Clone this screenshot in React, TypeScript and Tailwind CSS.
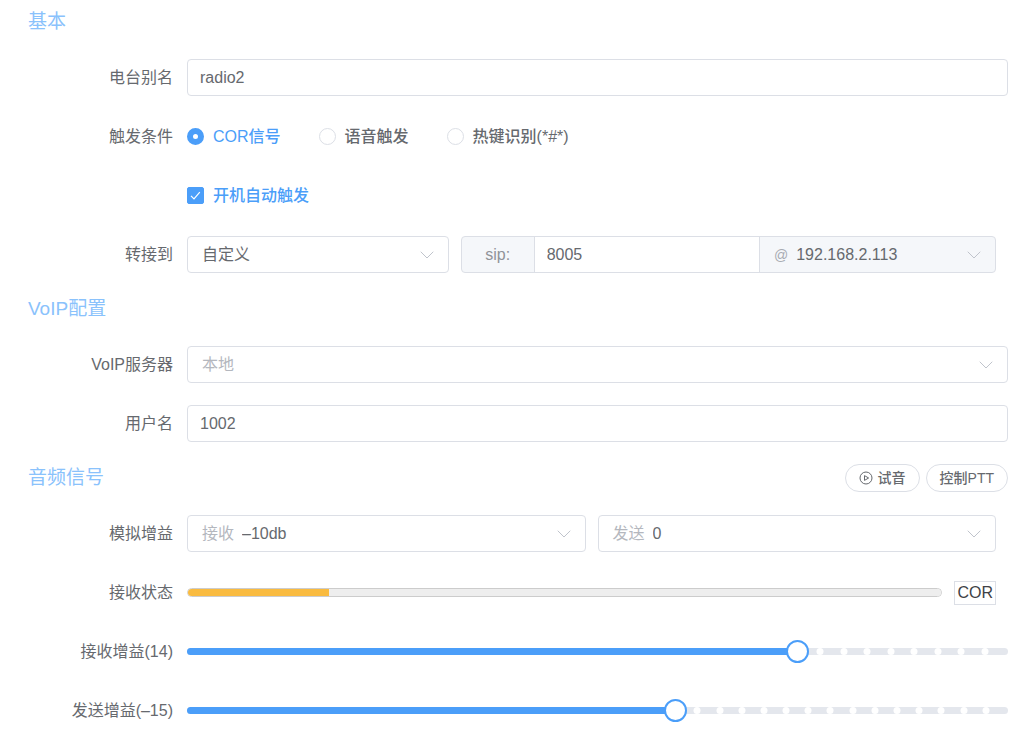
import React, { useState } from 'react';

interface RowProps {
  label?: string;
  htmlFor?: string;
  children: React.ReactNode;
}

interface SelectBoxProps {
  id: string;
  label: string;
  options: string[];
  prefix?: string;
  muted?: boolean;
}

interface GainSliderProps {
  id: string;
  min: number;
  max: number;
  value: number;
  onChange: (value: number) => void;
}

// Show negative gains with a full-width dash instead of a hyphen
const formatGain = (value: number) => (value < 0 ? `–${Math.abs(value)}` : `${value}`);

function Chevron() {
  return (
    <svg
      className="pointer-events-none h-2 w-3.5 shrink-0 text-[#c0c4cc]"
      viewBox="0 0 14 8"
      fill="none"
      stroke="currentColor"
      strokeLinecap="round"
      strokeLinejoin="round"
    >
      <path d="M1 1l6 6 6-6" />
    </svg>
  );
}

function Row({ label, htmlFor, children }: RowProps) {
  return (
    <div className="mb-[22px] flex h-[37px] items-center gap-3.5">
      {htmlFor ? (
        <label htmlFor={htmlFor} className="w-[145px] shrink-0 text-right">
          {label}
        </label>
      ) : (
        <span className="w-[145px] shrink-0 text-right">{label}</span>
      )}
      <div className="min-w-0 flex-1">{children}</div>
    </div>
  );
}

function SectionTitle({ title, children }: { title: string; children?: React.ReactNode }) {
  return (
    <div className="mb-[23px] flex h-7 items-center justify-between">
      <h2 className="text-[19px] leading-7 text-[#8ac2fc]">{title}</h2>
      {children && <div className="flex gap-1.5">{children}</div>}
    </div>
  );
}

function TextBox({ id, defaultValue }: { id: string; defaultValue: string }) {
  return (
    <input
      id={id}
      type="text"
      defaultValue={defaultValue}
      className="block h-[37px] w-full rounded border border-[#dcdfe6] bg-white px-3 outline-none focus:border-[#4b9ef9]"
    />
  );
}

function SelectBox({ id, label, options, prefix, muted }: SelectBoxProps) {
  return (
    <div className="flex h-[37px] items-center gap-2 rounded border border-[#dcdfe6] bg-white pr-3.5 pl-3.5">
      {prefix && <span className="shrink-0 text-[#b4b7be]">{prefix}</span>}
      <select
        id={id}
        aria-label={label}
        className={`h-full min-w-0 flex-1 appearance-none bg-transparent outline-none ${
          muted ? 'text-[#b4b7be]' : ''
        }`}
      >
        {options.map((option) => (
          <option key={option}>{option}</option>
        ))}
      </select>
      <Chevron />
    </div>
  );
}

function GainSlider({ id, min, max, value, onChange }: GainSliderProps) {
  const percent = (step: number) => `${((step - min) / (max - min)) * 100}%`;
  const stops: number[] = [];
  for (let step = value + 1; step < max; step++) {
    stops.push(step);
  }

  return (
    <div className="relative h-[7px] rounded-full bg-[#e4e7ed]">
      <div className="h-full rounded-l-full bg-[#4b9ef9]" style={{ width: percent(value) }} />
      {stops.map((step) => (
        <span
          key={step}
          className="absolute top-0 size-[7px] -translate-x-1/2 rounded-full bg-white"
          style={{ left: percent(step) }}
        />
      ))}
      <input
        id={id}
        type="range"
        min={min}
        max={max}
        value={value}
        onChange={(e) => onChange(Number(e.target.value))}
        className="absolute -top-2 -left-3 h-[23px] w-[calc(100%+24px)] cursor-pointer appearance-none bg-transparent outline-none [&::-webkit-slider-thumb]:size-[23px] [&::-webkit-slider-thumb]:appearance-none [&::-webkit-slider-thumb]:rounded-full [&::-webkit-slider-thumb]:border-2 [&::-webkit-slider-thumb]:border-solid [&::-webkit-slider-thumb]:border-[#4b9ef9] [&::-webkit-slider-thumb]:bg-white"
      />
    </div>
  );
}

const TRIGGERS = [
  { value: 'cor', label: 'COR信号' },
  { value: 'voice', label: '语音触发' },
  { value: 'hotkey', label: '热键识别(*#*)' },
];

const roundButton =
  'flex h-7 cursor-pointer items-center gap-[5px] rounded-full border border-[#dcdfe6] bg-white px-[13px] text-sm font-medium';

export default function App() {
  const [trigger, setTrigger] = useState('cor');
  const [autoStart, setAutoStart] = useState(true);
  const [rxGain, setRxGain] = useState(14);
  const [txGain, setTxGain] = useState(-15);

  return (
    <form className="bg-white pt-2 pr-4 pl-7 font-['Liberation_Sans','Noto_Sans_CJK_SC',sans-serif] text-base text-[#66696e]">
      <SectionTitle title="基本" />
      <Row label="电台别名" htmlFor="alias">
        <TextBox id="alias" defaultValue="radio2" />
      </Row>
      <Row label="触发条件">
        <div className="flex items-center gap-[38px]">
          {TRIGGERS.map((item) => (
            <label
              key={item.value}
              className={`flex cursor-pointer items-center gap-[9px] font-medium ${
                trigger === item.value ? 'text-[#4b9ef9]' : ''
              }`}
            >
              <input
                type="radio"
                name="trigger"
                value={item.value}
                checked={trigger === item.value}
                onChange={() => setTrigger(item.value)}
                className="size-[17px] shrink-0 appearance-none rounded-full border border-[#dcdfe6] bg-white checked:border-6 checked:border-[#4b9ef9]"
              />
              {item.label}
            </label>
          ))}
        </div>
      </Row>
      <Row>
        <label
          className={`flex w-fit cursor-pointer items-center gap-[9px] font-medium ${
            autoStart ? 'text-[#4b9ef9]' : ''
          }`}
        >
          <span className="grid size-[17px] place-items-center">
            <input
              type="checkbox"
              checked={autoStart}
              onChange={(e) => setAutoStart(e.target.checked)}
              className="col-start-1 row-start-1 size-[17px] appearance-none rounded-xs border border-[#dcdfe6] bg-white checked:border-[#4b9ef9] checked:bg-[#4b9ef9]"
            />
            <svg
              className="pointer-events-none col-start-1 row-start-1 size-[17px] text-white"
              viewBox="0 0 17 17"
              fill="none"
              stroke="currentColor"
              strokeWidth="1.2"
            >
              <path d="M4 8.8l3 3 5.8-6.6" />
            </svg>
          </span>
          开机自动触发
        </label>
      </Row>
      <Row label="转接到" htmlFor="target">
        <div className="grid grid-cols-3">
          <div className="pr-3">
            <SelectBox id="target" label="转接到" options={['自定义']} />
          </div>
          <div className="col-span-2 pr-3">
            <div className="flex h-[37px] overflow-hidden rounded border border-[#dcdfe6] bg-[#f5f7fa]">
              <label
                htmlFor="sip"
                className="flex w-[73px] shrink-0 items-center justify-center border-r border-[#dcdfe6] text-[#909399]"
              >
                sip:
              </label>
              <input
                id="sip"
                type="text"
                defaultValue="8005"
                className="min-w-0 flex-1 bg-white px-3 outline-none"
              />
              <div className="flex w-[236px] shrink-0 items-center gap-2 border-l border-[#dcdfe6] pr-3.5 pl-3.5">
                <span className="text-sm text-[#a8abb2]">@</span>
                <select
                  aria-label="服务器地址"
                  className="h-full min-w-0 flex-1 appearance-none bg-transparent outline-none"
                >
                  <option>192.168.2.113</option>
                </select>
                <Chevron />
              </div>
            </div>
          </div>
        </div>
      </Row>

      <SectionTitle title="VoIP配置" />
      <Row label="VoIP服务器" htmlFor="server">
        <SelectBox id="server" label="VoIP服务器" options={['本地']} muted />
      </Row>
      <Row label="用户名" htmlFor="username">
        <TextBox id="username" defaultValue="1002" />
      </Row>

      <SectionTitle title="音频信号">
        <button type="button" className={roundButton}>
          <svg className="size-3.5" viewBox="0 0 14 14" fill="none" stroke="currentColor">
            <circle cx="7" cy="7" r="6" />
            <path d="M5.5 4.6v4.8L9.6 7z" strokeLinejoin="round" />
          </svg>
          试音
        </button>
        <button type="button" className={roundButton}>
          控制PTT
        </button>
      </SectionTitle>
      <Row label="模拟增益" htmlFor="analog-rx">
        <div className="grid grid-cols-2">
          <div className="pr-3">
            <SelectBox id="analog-rx" label="接收" prefix="接收" options={['–10db']} />
          </div>
          <div className="pr-3">
            <SelectBox id="analog-tx" label="发送" prefix="发送" options={['0']} />
          </div>
        </div>
      </Row>
      <Row label="接收状态" htmlFor="rx-level">
        <div className="flex items-center gap-3 pr-3">
          <progress
            id="rx-level"
            max={752}
            value={141}
            className="block h-[9px] min-w-0 flex-1 appearance-none overflow-hidden rounded-full border border-[#cccccc] bg-[#eeeeee] [&::-webkit-progress-bar]:bg-[#eeeeee] [&::-webkit-progress-value]:bg-[#f9bb40]"
          />
          <span className="border border-[#dcdfe6] px-0.5 leading-[22px] text-[#404246]">COR</span>
        </div>
      </Row>
      <Row label={`接收增益(${formatGain(rxGain)})`} htmlFor="rx-gain">
        <GainSlider id="rx-gain" min={-12} max={23} value={rxGain} onChange={setRxGain} />
      </Row>
      <Row label={`发送增益(${formatGain(txGain)})`} htmlFor="tx-gain">
        <GainSlider id="tx-gain" min={-37} max={0} value={txGain} onChange={setTxGain} />
      </Row>
    </form>
  );
}
